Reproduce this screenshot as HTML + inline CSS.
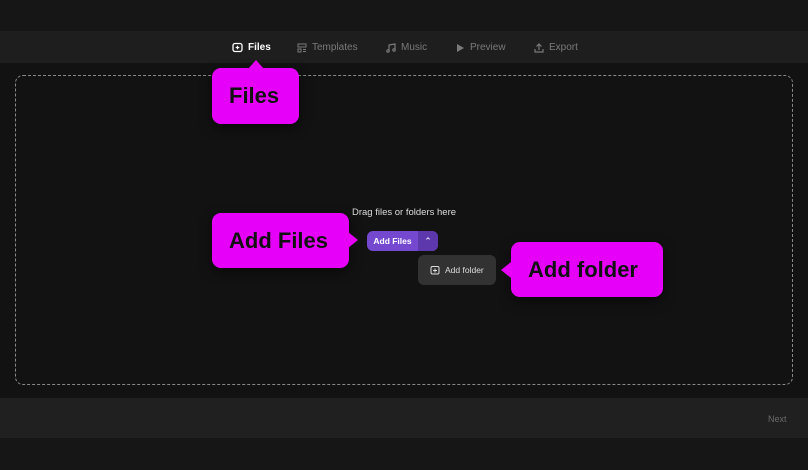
<!DOCTYPE html>
<html><head><style>
body{margin:0;width:808px;height:470px;background:#161616;font-family:"Liberation Sans",sans-serif;position:relative;overflow:hidden}
.a{position:absolute}
.nav{top:31px;left:0;width:808px;height:32px;background:#1e1e1e}
.ni{top:42px;font-size:10px;color:#7a7a7a;display:flex;align-items:center;gap:5px}
.main{top:63px;left:0;width:808px;height:335px;background:#121212}
.box{left:15px;top:75px;width:776px;height:308px;border:1.3px dashed #888;border-radius:8px}
.foot{top:398px;left:0;width:808px;height:40px;background:#202020}
.co{background:#e600fa;border-radius:9px;color:#111;font-weight:bold;font-size:22px;display:flex;align-items:center;padding-left:17px;box-sizing:border-box;box-shadow:0 4px 12px rgba(0,0,0,.5)}
</style></head><body>
<div class="a nav"></div>
<div class="a ni" style="left:232px;color:#fff;font-weight:bold"><svg width="11" height="11" viewBox="0 0 11 11"><rect x="1" y="1.5" width="9" height="8" rx="2" fill="none" stroke="#fff" stroke-width="1.3"/><path d="M5.5 3.7v3.6M3.7 5.5h3.6" stroke="#fff" stroke-width="1.2"/></svg>Files</div>
<div class="a ni" style="left:297px"><svg width="10" height="10" viewBox="0 0 10 10" fill="none" stroke="#7a7a7a"><rect x="1" y="1" width="8" height="3"/><rect x="1" y="6" width="3" height="3"/><path d="M6 6.5h3M6 8.5h3"/></svg>Templates</div>
<div class="a ni" style="left:386px"><svg width="10" height="10" viewBox="0 0 10 10" fill="none" stroke="#7a7a7a" stroke-width="1.2"><path d="M3 8V2l6-1v6"/><circle cx="2" cy="8" r="1.2"/><circle cx="8" cy="7" r="1.2"/></svg>Music</div>
<div class="a ni" style="left:456px"><svg width="9" height="10"><path d="M1 1l7 4-7 4z" fill="#7a7a7a"/></svg>Preview</div>
<div class="a ni" style="left:534px"><svg width="10" height="10" fill="none" stroke="#7a7a7a" stroke-width="1.2"><path d="M5 7V1M2.5 3.5L5 1l2.5 2.5M1 6v3h8V6"/></svg>Export</div>
<div class="a main"></div>
<div class="a box"></div>
<div class="a foot"></div>
<div class="a" style="left:768px;top:414px;font-size:9px;color:#6a6a6a">Next</div>
<div class="a" style="left:352px;top:207px;font-size:9.5px;color:#ddd">Drag files or folders here</div>
<div class="a" style="left:367px;top:231px;width:71px;height:20px;border-radius:6px;background:#7548d0;overflow:hidden">
<div class="a" style="left:0;top:0;width:51px;height:20px;color:#fff;font-size:8.5px;font-weight:bold;line-height:20px;text-align:center">Add Files</div>
<div class="a" style="left:51px;top:0;width:20px;height:20px;background:#5d38ad;color:#fff;font-size:9px;text-align:center;line-height:20px">&#8963;</div></div>
<div class="a" style="left:418px;top:255px;width:78px;height:30px;border-radius:6px;background:#323232;color:#ddd;font-size:8.5px;display:flex;align-items:center;gap:5px;padding-left:12px;box-sizing:border-box"><svg width="10" height="10" fill="none" stroke="#ddd"><rect x="1" y="1.5" width="8" height="7.5" rx="1.5"/><path d="M5 3.5v4M3 5.5h4"/></svg>Add folder</div>
<div class="a co" style="left:212px;top:68px;width:87px;height:56px">Files</div>
<div class="a" style="left:248px;top:60px;width:0;height:0;border-left:8px solid transparent;border-right:8px solid transparent;border-bottom:9px solid #e600fa"></div>
<div class="a co" style="left:212px;top:213px;width:137px;height:55px">Add Files</div>
<div class="a" style="left:348px;top:232px;border-top:8px solid transparent;border-bottom:8px solid transparent;border-left:10px solid #e600fa"></div>
<div class="a co" style="left:511px;top:242px;width:152px;height:55px">Add folder</div>
<div class="a" style="left:501px;top:262px;border-top:8px solid transparent;border-bottom:8px solid transparent;border-right:10px solid #e600fa"></div>
</body></html>
